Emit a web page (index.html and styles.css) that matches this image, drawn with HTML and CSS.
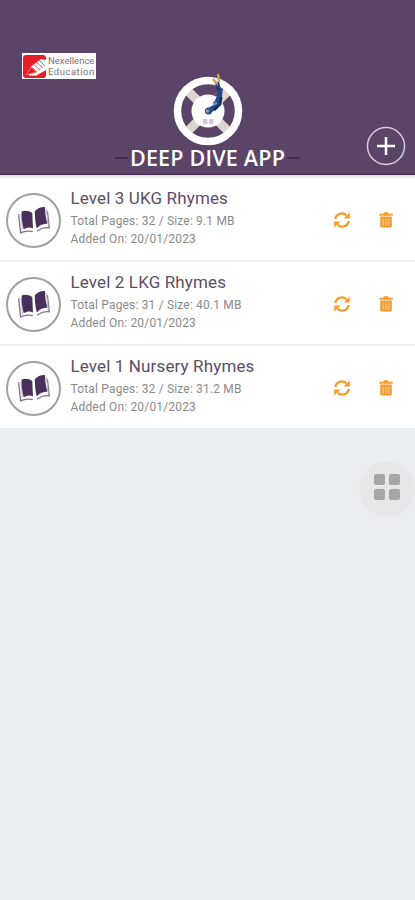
FILE: index.html
```html
<!DOCTYPE html>
<html lang="en">
<head>
<meta charset="utf-8">
<title>Deep Dive App</title>
<link rel="stylesheet" href="styles.css">
</head>
<body>
<svg width="0" height="0" class="defs" aria-hidden="true">
  <symbol id="book" viewBox="0 0 32 28">
    <path d="M1.600 8 3.500 26c3.500-1.800 7-2.300 11.800-1.300M19.500 24.500c3-2.500 6.500-3.700 11.800-3.500L29.500 5" fill="none" stroke="#85718c" stroke-width="1.300"/>
    <path d="M3.800 7.500 5.300 23.500M28.300 3l2 15" fill="none" stroke="#c4b6c5" stroke-width="1"/>
    <path d="M4.500 5.300c3.500-1.500 7-.9 10.300 1.500l.7 15c-2.800-1.500-5.500-1.300-9 .8C5 17 4.400 11 4.500 5.300zM17.300 5.100c2.300-3 5.500-4.400 9.900-4.300 0 5.500.7 10.800 2.300 16.200-4 .2-7.700 1.700-10.300 4.700-1.300-5-2-10.500-1.900-16.600z" fill="#49305c"/>
  </symbol>
  <symbol id="sync" viewBox="0 0 18 18">
    <path d="M2.300 8A6.500 6.500 0 0 1 13.300 4.300M15.700 10A6.500 6.500 0 0 1 4.700 13.700" fill="none" stroke="#fa971f" stroke-width="2.200"/>
    <path d="M16.700 1.500v6h-6zM1.300 16.500v-6h6z" fill="#fa971f"/>
  </symbol>
  <symbol id="trash" viewBox="0 0 14 16">
    <path d="M.3 1.700h4L5 .2h4l.7 1.500h4v2H.3zM1.200 4.500h11.600v9.800c0 .8-.5 1.300-1.300 1.300h-9c-.8 0-1.300-.5-1.300-1.300z" fill="#f59a2c"/>
    <path d="M4.100 6.500v7.300M7 6.500v7.300M9.900 6.500v7.300" stroke="#ffd49c" stroke-width="1"/>
  </symbol>
</svg>
<header class="header">
  <div class="partner">
    <svg width="23" height="23" viewBox="0 0 23 23"><rect width="23" height="23" rx="3" fill="#e91d27"/><path d="M3 20 8.500 11 18 4l5 1v10l-9 5z" fill="#fff"/><path d="m3 20 5.500-8 5 5zM10 9l7 6M13 7l7 6M16 5l6 6" fill="#e91d27" stroke="#ef6268" stroke-width="1"/><path d="M6 20h8" stroke="#fff"/></svg>
    <div class="partner-name"><span class="nex">Nexellence</span><span class="edu">Education</span></div>
  </div>
  <div class="brand">
    <svg class="buoy" width="76" height="76" viewBox="0 0 76 76">
      <path d="m17 19 42 42M59 19 17 61" stroke="#ded5cf" stroke-width="9"/>
      <circle cx="38" cy="40" r="30.500" fill="none" stroke="#fff" stroke-width="7.500"/>
      <circle cx="38" cy="40" r="16.500" fill="#fff"/>
      <path d="M33 48h4.500v5H33zM39 48h4.500v5H39z" fill="#cfc7eb"/>
      <path d="m37 41 8-5 4-9 1-8" fill="none" stroke="#244b91" stroke-width="5.500" stroke-linejoin="round"/>
      <path d="m44 39 6-6 1-7" fill="none" stroke="#142e68" stroke-width="3"/>
      <circle cx="38.500" cy="40" r="3.500" fill="#304f80"/>
      <circle cx="37.500" cy="40" r="1.500" fill="#8db1d5"/>
      <path d="m48 19-2-6M50 19l-2-8" stroke="#203d7c" stroke-width="2"/>
      <path d="m47 13-4-5M49 11l-1-8" stroke="#c9a44b" stroke-width="2.500"/>
      <path d="m44 24 3-2M43 32l3-2" stroke="#a9557c" stroke-width="1.500"/>
      <path d="m43 34 4-2" stroke="#66a7df" stroke-width="1.500"/>
    </svg>
    <div class="brand-line"><i></i><span class="brand-name">DEEP DIVE APP</span><i></i></div>
  </div>
  <button class="add" aria-label="Add"><svg width="40" height="40" viewBox="0 0 40 40"><circle cx="20" cy="20" r="18.500" fill="none" stroke="#d6ccdc" stroke-width="1.500"/><path d="M20 11v18M11 20h18" stroke="#fff" stroke-width="2.500"/></svg></button>
</header>
<main class="list">
  <article class="row">
    <div class="badge"><svg width="33" height="29"><use href="#book"/></svg></div>
    <div class="info"><h2>Level 3 UKG Rhymes</h2><p>Total Pages: 32 / Size: 9.1 MB</p><p class="date">Added On: 20/01/2023</p></div>
    <div class="actions"><svg width="18" height="18"><use href="#sync"/></svg><svg width="14" height="16"><use href="#trash"/></svg></div>
  </article>
  <article class="row">
    <div class="badge"><svg width="33" height="29"><use href="#book"/></svg></div>
    <div class="info"><h2>Level 2 LKG Rhymes</h2><p>Total Pages: 31 / Size: 40.1 MB</p><p class="date">Added On: 20/01/2023</p></div>
    <div class="actions"><svg width="18" height="18"><use href="#sync"/></svg><svg width="14" height="16"><use href="#trash"/></svg></div>
  </article>
  <article class="row">
    <div class="badge"><svg width="33" height="29"><use href="#book"/></svg></div>
    <div class="info"><h2>Level 1 Nursery Rhymes</h2><p>Total Pages: 32 / Size: 31.2 MB</p><p class="date">Added On: 20/01/2023</p></div>
    <div class="actions"><svg width="18" height="18"><use href="#sync"/></svg><svg width="14" height="16"><use href="#trash"/></svg></div>
  </article>
</main>
<div class="floating"><i></i><i></i><i></i><i></i></div>
</body>
</html>
```
FILE: styles.css
```css
* { box-sizing: border-box; }
body {
  margin: 0;
  height: 900px;
  overflow: hidden;
  background: #ebeef1;
  font-family: Roboto, sans-serif;
}
.defs { position: absolute; }
.header {
  height: 175px;
  display: grid;
  grid-template-columns: 96px 1fr 96px;
  background: #5a4468;
  border-bottom: 1px solid #42264f;
}
.partner {
  display: flex;
  align-items: center;
  gap: 2px;
  width: 74px;
  height: 26px;
  margin: 53px 0 0 22px;
  padding-left: 1px;
  background: #fff;
}
.partner svg { flex: none; }
.partner-name {
  display: flex;
  flex-direction: column;
  font-size: 9.5px;
  line-height: 11px;
  color: #77727a;
  white-space: nowrap;
}
.edu { letter-spacing: 0.5px; }
.brand {
  display: flex;
  flex-direction: column;
  align-items: center;
  padding-top: 71px;
}
.buoy { flex: none; }
.brand-line {
  display: flex;
  align-items: center;
  gap: 2px;
  height: 22px;
}
.brand-line i {
  width: 13px;
  height: 2px;
  background: #432d4d;
}
.brand-name {
  font: 600 21.5px/22px "Open Sans", sans-serif;
  letter-spacing: 0.2px;
  color: #fff;
  white-space: nowrap;
}
.add {
  width: 40px;
  height: 40px;
  margin: 126px 0 0 47px;
  padding: 0;
  border: 0;
  background: none;
}
.add svg { display: block; }
.list {
  padding-top: 3px;
  background: linear-gradient(#dedbe0, #fff 4px);
}
.row {
  display: flex;
  height: 84px;
  border-bottom: 2px solid #f2f2f3;
}
.row:last-child {
  height: 82px;
  border-bottom: 0;
}
.badge {
  display: flex;
  align-items: center;
  justify-content: center;
  flex: none;
  width: 55px;
  height: 55px;
  margin: 14.5px 0 0 5.5px;
  border: 2px solid #a19ea4;
  border-radius: 50%;
}
.info {
  flex: 1;
  padding: 8px 0 0 10px;
  white-space: nowrap;
}
h2 {
  margin: 0;
  font-size: 17px;
  line-height: 24px;
  font-weight: 400;
  letter-spacing: 0.13px;
  color: #5d4d67;
}
p {
  margin: 2px 0 0;
  font-size: 12px;
  line-height: 18px;
  letter-spacing: 0.17px;
  color: #8a8a8a;
}
.date { margin: 0; }
.actions {
  display: flex;
  align-items: center;
  gap: 28px;
  height: 83px;
  padding-right: 22px;
}
.floating {
  position: absolute;
  left: 359px;
  top: 461px;
  width: 56px;
  height: 56px;
  display: grid;
  grid-template-columns: 11px 11px;
  grid-template-rows: 11px 11px;
  gap: 4px;
  place-content: center;
  padding-bottom: 4px;
  border-radius: 50%;
  background: #e5e7e9;
}
.floating i {
  border-radius: 2px;
  background: #a5a6a8;
}
```
